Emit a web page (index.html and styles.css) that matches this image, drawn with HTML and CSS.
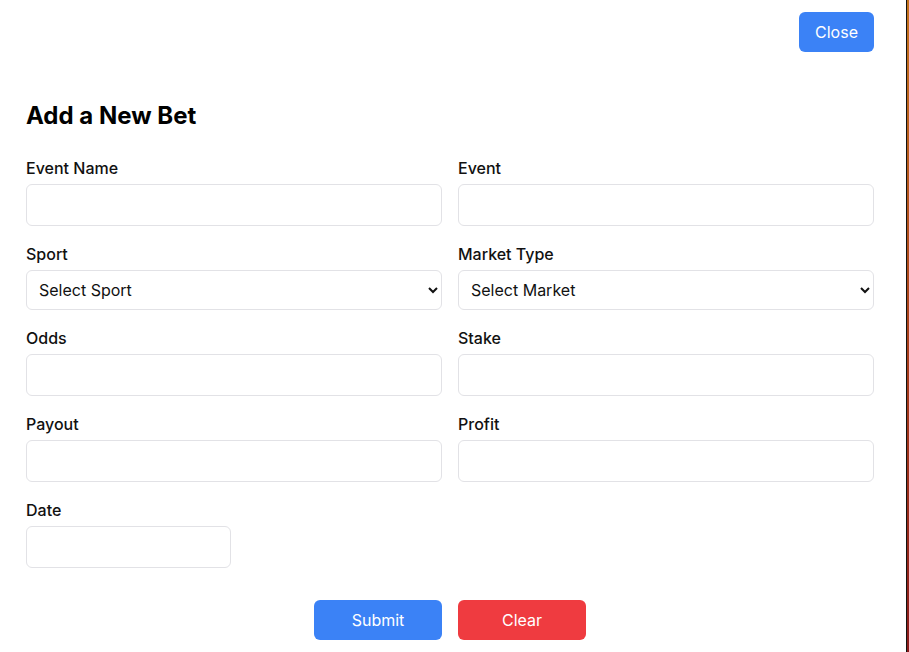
FILE: index.html
```html
<!DOCTYPE html>
<html lang="en">
<head>
<meta charset="utf-8">
<title>Add a New Bet</title>
<link rel="stylesheet" href="styles.css">
</head>
<body>
<div class="modal">
  <div class="modal-header">
    <button class="btn btn-blue btn-close" type="button">Close</button>
  </div>
  <h2 class="title">Add a New Bet</h2>
  <form class="form">
    <div class="grid">
      <div class="field">
        <label class="label">Event Name</label>
        <input class="input" type="text">
      </div>
      <div class="field">
        <label class="label">Event</label>
        <input class="input" type="text">
      </div>
      <div class="field">
        <label class="label">Sport</label>
        <select class="select"><option>Select Sport</option></select>
      </div>
      <div class="field">
        <label class="label">Market Type</label>
        <select class="select"><option>Select Market</option></select>
      </div>
      <div class="field">
        <label class="label">Odds</label>
        <input class="input" type="text">
      </div>
      <div class="field">
        <label class="label">Stake</label>
        <input class="input" type="text">
      </div>
      <div class="field">
        <label class="label">Payout</label>
        <input class="input" type="text">
      </div>
      <div class="field">
        <label class="label">Profit</label>
        <input class="input" type="text">
      </div>
      <div class="field">
        <label class="label">Date</label>
        <input class="input input-date" type="text">
      </div>
    </div>
    <div class="actions">
      <button class="btn btn-blue btn-action" type="button">Submit</button>
      <button class="btn btn-red btn-action" type="button">Clear</button>
    </div>
  </form>
</div>
</body>
</html>
```
FILE: styles.css
```css
* { box-sizing: border-box; }
html, body { height: 100%; }
body {
  margin: 0;
  font-family: Inter, "Liberation Sans", sans-serif;
  color: #111;
  background: linear-gradient(180deg, #c4731c 0%, #a63d1a 55%, #8a1b1a 100%);
  overflow: hidden;
}
.modal {
  width: 907px;
  height: 652px;
  background: #fff;
  border-right: 1px solid #111;
  padding: 12px 32px 0 26px;
}
.modal-header {
  display: flex;
  justify-content: flex-end;
  padding-right: 0;
}
.btn {
  font-family: Inter, "Liberation Sans", sans-serif;
  font-size: 16px;
  line-height: 24px;
  border: none;
  border-radius: 6px;
  color: #fff;
  cursor: pointer;
}
.btn-blue { background: #3b82f6; }
.btn-red { background: #ef3b40; }
.btn-close {
  width: 75px;
  height: 40px;
  padding: 0;
}
.title {
  margin: 48px 0 24px;
  font-size: 24px;
  line-height: 32px;
  font-weight: 700;
  color: #000;
}
.grid {
  display: grid;
  grid-template-columns: 416px 416px;
  column-gap: 16px;
  row-gap: 16px;
}
.field {
  display: flex;
  flex-direction: column;
}
.label {
  font-size: 16px;
  line-height: 24px;
  font-weight: 500;
  margin-bottom: 4px;
  color: #111;
}
.input {
  height: 42px;
  border: 1px solid #e2e2e6;
  border-radius: 6px;
  padding: 8px 12px;
  font-family: inherit;
  font-size: 16px;
  background: #fff;
}
.input-date { width: 205px; }
.select {
  height: 40px;
  border: 1px solid #e2e2e6;
  border-radius: 6px;
  padding: 0 8px;
  font-family: inherit;
  font-size: 16px;
  color: #111;
  background: #fff;
}
.actions {
  display: flex;
  justify-content: center;
  gap: 16px;
  margin-top: 32px;
}
.btn-action {
  width: 128px;
  height: 40px;
}
```
